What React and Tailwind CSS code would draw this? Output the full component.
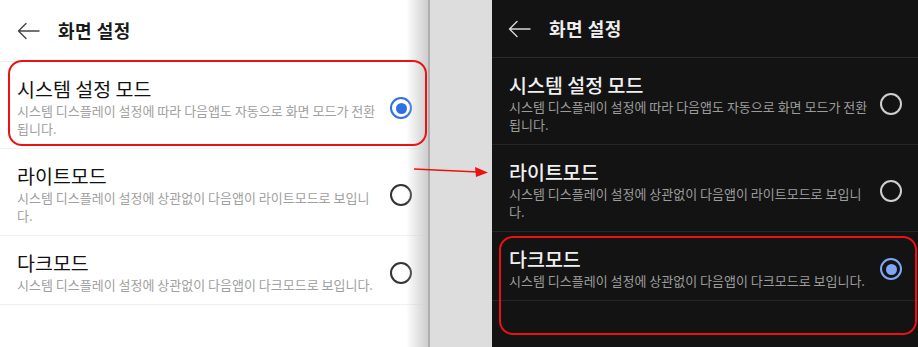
const items = [
  {
    title: "시스템 설정 모드",
    lines: ["시스템 디스플레이 설정에 따라 다음앱도 자동으로 화면 모드가 전환", "됩니다."],
  },
  {
    title: "라이트모드",
    lines: ["시스템 디스플레이 설정에 상관없이 다음앱이 라이트모드로 보입니", "다."],
  },
  {
    title: "다크모드",
    lines: ["시스템 디스플레이 설정에 상관없이 다음앱이 다크모드로 보입니다."],
  },
];

function BackArrow({ color }) {
  return (
    <svg width="23" height="18" viewBox="0 0 23 18" fill="none">
      <path d="M9 1.5 L1.5 9 L9 16.5 M1.5 9 H22" stroke={color} strokeWidth="1.4" strokeLinecap="round" strokeLinejoin="round" />
    </svg>
  );
}

function Radio({ selected, dark }) {
  if (selected) {
    return (
      <span
        className={`flex h-[22px] w-[22px] items-center justify-center rounded-full border-[2.5px] ${
          dark ? "border-[#7fa7f6]" : "border-[#2f6fe4]"
        }`}
      >
        <span className={`h-[11px] w-[11px] rounded-full ${dark ? "bg-[#7fa7f6]" : "bg-[#2f6fe4]"}`} />
      </span>
    );
  }
  return (
    <span
      className={`block h-[22px] w-[22px] rounded-full border-2 ${dark ? "border-[#cfcfcf]" : "border-[#333333]"}`}
    />
  );
}

function Panel({ dark, selected }) {
  return (
    <div className={`relative flex h-full flex-col ${dark ? "bg-[#131313]" : "bg-white"}`}>
      <div
        className={`flex items-center gap-[18px] border-b ${
          dark ? "h-[58px] border-[#2c2c2c] pl-[16px]" : "h-[62px] border-[#eeeeee] pl-[17px]"
        }`}
      >
        <BackArrow color={dark ? "#d8d8d8" : "#444444"} />
        <span className={`text-[18px] font-bold tracking-[0.5px] ${dark ? "text-[#eeeeee]" : "text-[#1a1a1a]"}`}>
          화면 설정
        </span>
      </div>
      {items.map((it, i) => (
        <div
          key={it.title}
          className={`flex items-center justify-between border-b pb-[10px] pt-[16px] ${
            dark ? "border-[#262626] pl-[17px] pr-[16px]" : "border-[#f0f0f0] pl-[17px] pr-[16px]"
          }`}
        >
          <div>
            <div
              className={`text-[19.5px] leading-[22px] ${dark ? "font-medium text-[#f0f0f0]" : "text-[#111111]"}`}
            >
              {it.title}
            </div>
            <div className={`mt-[2px] text-[13px] leading-[18px] ${dark ? "text-[#9c9c9c]" : "text-[#a0a0a0]"}`}>
              {it.lines.map((l) => (
                <div key={l}>{l}</div>
              ))}
            </div>
          </div>
          <Radio selected={selected === i} dark={dark} />
        </div>
      ))}
      <div className="flex-1" />
    </div>
  );
}

export default function App() {
  return (
    <div
      className="relative flex h-[347px] w-[918px] overflow-hidden bg-[#dedede]"
      style={{ fontFamily: '"Noto Sans CJK KR", "Noto Sans", sans-serif' }}
    >
      <div className="relative w-[428px] shrink-0">
        <Panel dark={false} selected={0} />
        <div className="pointer-events-none absolute right-0 top-0 h-full w-[22px] bg-gradient-to-r from-white/0 to-[#cdcdcd]" />
        <div className="pointer-events-none absolute left-[8px] top-[60px] h-[86px] w-[419px] rounded-[14px] border-2 border-[#ee1111]" />
      </div>
      <div className="w-[2px] shrink-0 bg-[#aeaeae]" />
      <div className="w-[62px] shrink-0 bg-[#dddddd]" />
      <div className="relative flex-1">
        <Panel dark selected={2} />
        <div className="pointer-events-none absolute left-[7px] top-[236px] h-[99px] w-[418px] rounded-[14px] border-2 border-[#ee1111]" />
      </div>
      <svg className="pointer-events-none absolute left-[412px] top-[160px]" width="80" height="20" viewBox="0 0 80 20">
        <line x1="2" y1="9" x2="66" y2="12" stroke="#ee1111" strokeWidth="1.6" />
        <polygon points="76,12.5 63,7 64,17" fill="#ee1111" />
      </svg>
    </div>
  );
}
